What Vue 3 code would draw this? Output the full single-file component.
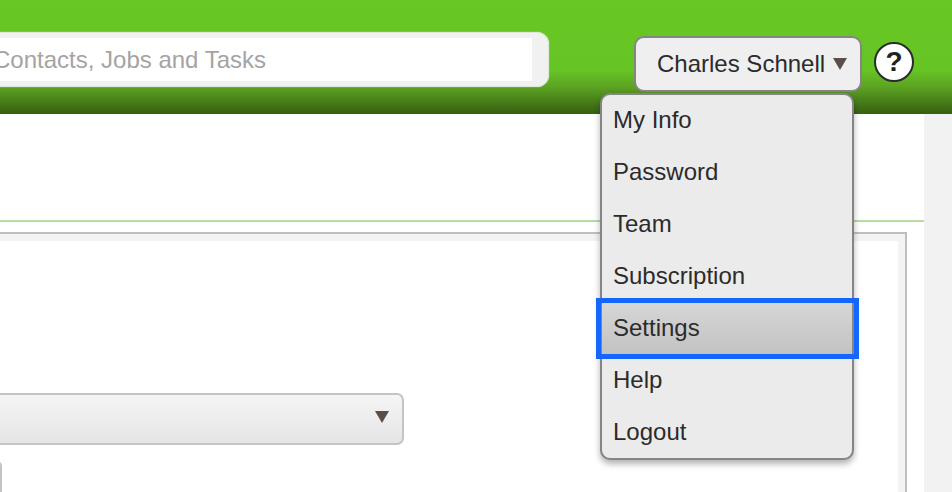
<script setup>
const menuItems = ['My Info', 'Password', 'Team', 'Subscription', 'Settings', 'Help', 'Logout']
</script>

<template>
  <div class="page">
    <header class="topBar">
      <div class="search">
        <div class="searchInput">Contacts, Jobs and Tasks</div>
      </div>
      <button class="userBtn">
        Charles Schnell
        <svg class="caret" width="14" height="12" viewBox="0 0 14 12"><path d="M0 0H14L7 12Z" /></svg>
      </button>
      <div class="helpBtn">?</div>
    </header>

    <ul class="userMenu">
      <li v-for="item in menuItems" :key="item" :class="{ active: item === 'Settings' }">{{ item }}</li>
    </ul>

    <div class="content">
      <main class="main">
        <div class="divider"></div>
        <section class="panel">
          <div class="panelInner">
            <div class="select">
              <svg class="caret" width="14" height="12" viewBox="0 0 14 12"><path d="M0 0H14L7 12Z" /></svg>
            </div>
            <div class="field"></div>
          </div>
        </section>
      </main>
      <div class="scrollTrack"></div>
    </div>
  </div>
</template>

<style>
html,
body {
  margin: 0;
  overflow: hidden;
  background: #fff;
}
</style>

<style scoped>
.page {
  position: relative;
  width: 952px;
  height: 492px;
  overflow: hidden;
  font-family: 'Liberation Sans', Arial, sans-serif;
}

.topBar {
  display: flex;
  align-items: flex-start;
  height: 114px;
  box-sizing: border-box;
  padding-top: 36px;
  background: linear-gradient(to bottom, #68c724 0, #66c425 62%, #5ca322 76%, #365f11 100%);
}

.search {
  box-sizing: border-box;
  width: 569px;
  height: 55px;
  margin: -4px 0 0 -20px;
  padding: 5px 16px 5px 0;
  background: #f1f1f1;
  border: 1px solid #dfe8d8;
  border-radius: 0 12px 12px 0;
  box-shadow: 0 0 1px #fff;
}

.searchInput {
  height: 100%;
  padding-left: 12px;
  background: #fff;
  color: #a5a3a3;
  font-size: 24px;
  line-height: 43px;
  white-space: nowrap;
}

.userBtn {
  display: flex;
  align-items: center;
  gap: 8px;
  box-sizing: border-box;
  width: 228px;
  height: 56px;
  margin-left: 85px;
  padding: 0 0 0 21px;
  background: #efefef;
  border: 2px solid #858585;
  border-radius: 10px;
  color: #2b2b2b;
  font-family: inherit;
  font-size: 24px;
}

.caret {
  flex: none;
  fill: #5a4f48;
}

.helpBtn {
  box-sizing: border-box;
  width: 40px;
  height: 40px;
  margin: 6px 0 0 12px;
  background: #fff;
  border: 2px solid #2a2a2a;
  border-radius: 50%;
  color: #222;
  font-size: 28px;
  font-weight: bold;
  line-height: 36px;
  text-align: center;
}

.userMenu {
  position: absolute;
  top: 93px;
  left: 600px;
  box-sizing: border-box;
  width: 254px;
  height: 367px;
  margin: 0;
  padding: 0;
  list-style: none;
  background: #ebebeb;
  border: 2px solid #858585;
  border-radius: 10px;
  box-shadow: 0 4px 6px rgba(0, 0, 0, 0.3);
  z-index: 2;
}

.userMenu li {
  position: relative;
  height: 52px;
  padding-left: 11px;
  color: #2b2b2b;
  font-size: 24px;
  line-height: 50px;
}

.userMenu li.active {
  background: linear-gradient(to bottom, #d6d6d6, #c2c2c2);
}

.userMenu li.active::after {
  content: '';
  position: absolute;
  top: -5px;
  right: -7px;
  bottom: -4px;
  left: -6px;
  border: 5px solid #1565ff;
}

.content {
  display: flex;
  height: 378px;
}

.main {
  flex: 1;
  padding-top: 106px;
  min-width: 0;
}

.divider {
  height: 2px;
  background: #b7dca0;
}

.panel {
  box-sizing: border-box;
  height: 300px;
  margin: 10px 17px 0 -20px;
  padding: 7px 7px 0 0;
  background: #f3f3f3;
  border-top: 2px solid #bfbfbf;
  border-right: 2px solid #bfbfbf;
}

.panelInner {
  height: 100%;
  padding-top: 152px;
  background: #fff;
}

.select {
  display: flex;
  align-items: center;
  justify-content: flex-end;
  box-sizing: border-box;
  width: 424px;
  height: 52px;
  padding: 0 13px 4px 0;
  background: linear-gradient(to bottom, #f5f5f5, #e5e5e5);
  border: 2px solid #c4c4c4;
  border-radius: 0 7px 7px 0;
}

.field {
  box-sizing: border-box;
  width: 22px;
  height: 60px;
  margin-top: 16px;
  background: #fff;
  border: 2px solid #c4c4c4;
  border-radius: 0 5px 0 0;
}

.scrollTrack {
  flex: none;
  width: 28px;
  background: #f2f2f2;
}
</style>
